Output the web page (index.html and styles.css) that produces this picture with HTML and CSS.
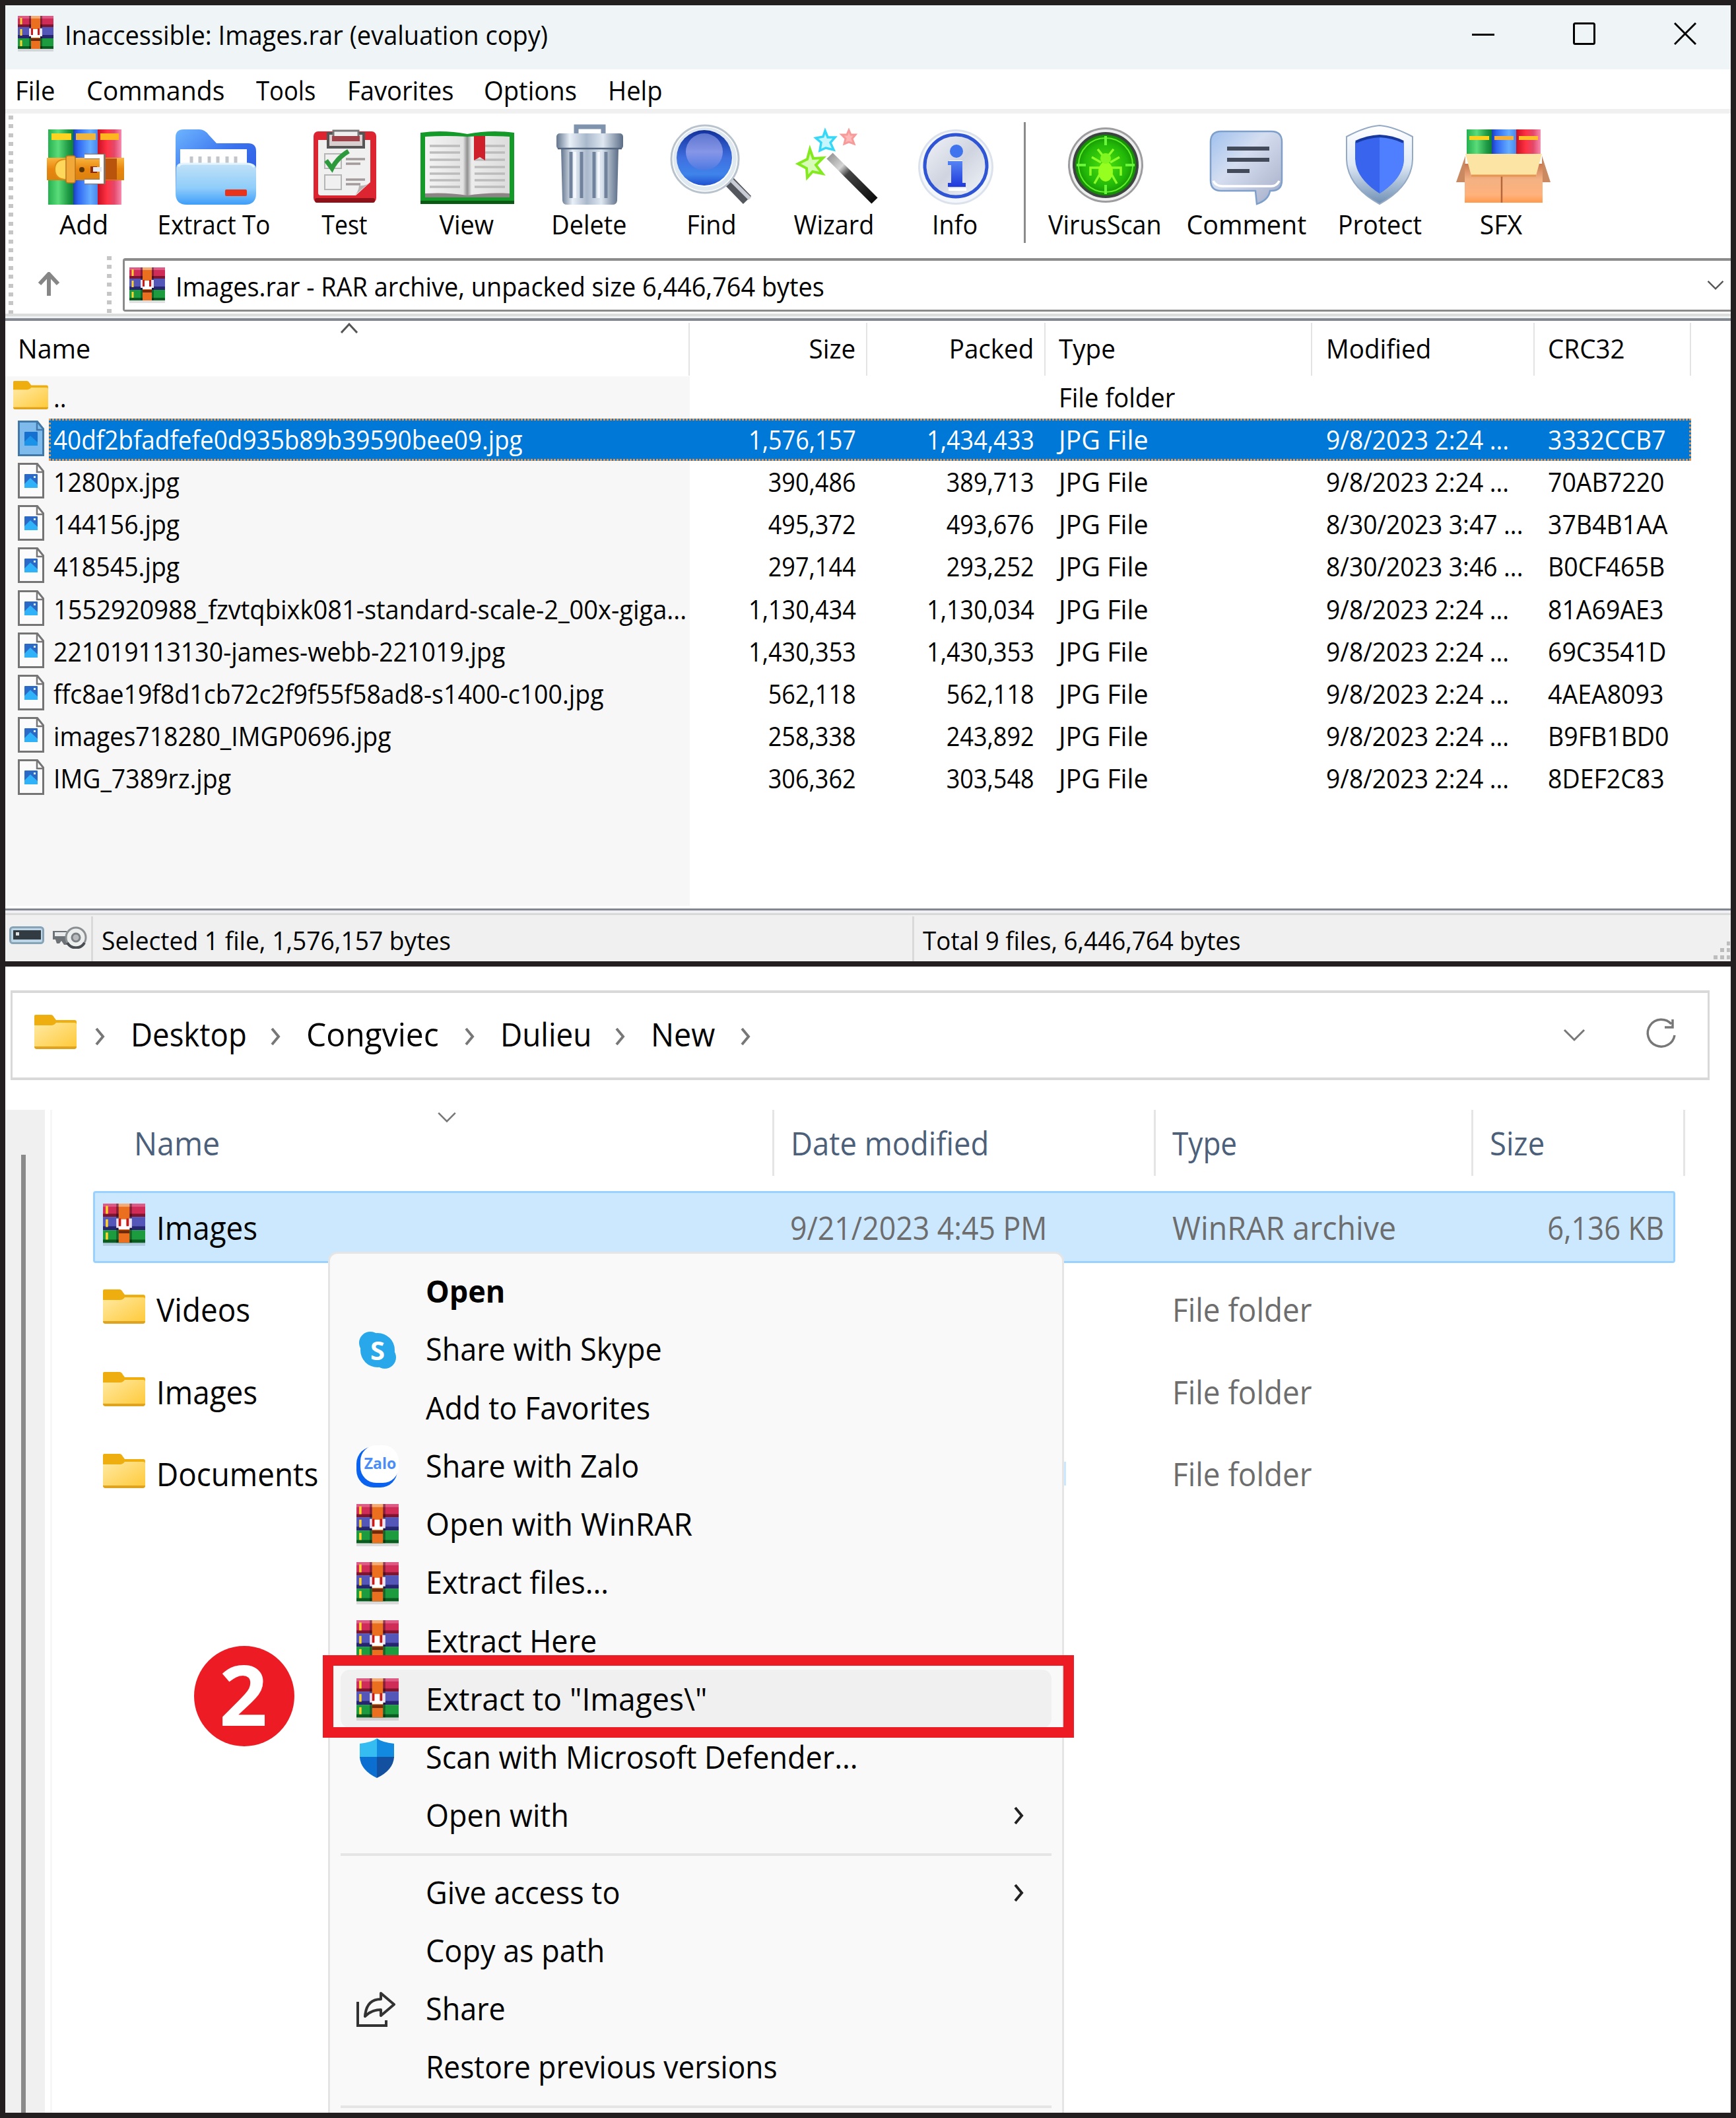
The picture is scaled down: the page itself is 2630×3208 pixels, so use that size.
FILE: index.html
```html
<!DOCTYPE html>
<html lang="en">
<head>
<meta charset="utf-8">
<title>Inaccessible: Images.rar</title>
<link rel="stylesheet" href="styles.css">
</head>
<body>
<svg class="defs" width="0" height="0">
  <defs>
    <linearGradient id="gFolder" x1="0" y1="0" x2="1" y2="1"><stop offset="0" stop-color="#ffe9a2"/><stop offset="1" stop-color="#ffc937"/></linearGradient>
    <linearGradient id="gG" x1="0" x2="1"><stop offset="0" stop-color="#25b04f"/><stop offset=".4" stop-color="#5bdc7a"/><stop offset=".8" stop-color="#1f9a45"/><stop offset="1" stop-color="#0f7f33"/></linearGradient>
    <linearGradient id="gB" x1="0" x2="1"><stop offset="0" stop-color="#1b3fb8"/><stop offset=".2" stop-color="#2f66f2"/><stop offset=".7" stop-color="#64adff"/><stop offset="1" stop-color="#4a86ea"/></linearGradient>
    <linearGradient id="gR" x1="0" x2="1"><stop offset="0" stop-color="#c90f22"/><stop offset=".4" stop-color="#ff3345"/><stop offset=".7" stop-color="#e4486a"/><stop offset="1" stop-color="#f78bb0"/></linearGradient>
    <linearGradient id="gO" x1="0" x2="0" y1="0" y2="1"><stop offset="0" stop-color="#f9b53e"/><stop offset=".5" stop-color="#e8860f"/><stop offset="1" stop-color="#d9820f"/></linearGradient>
    <linearGradient id="gSky" x1="0" x2="0" y1="0" y2="1"><stop offset="0" stop-color="#c2e2f8"/><stop offset=".6" stop-color="#8fcdfa"/><stop offset="1" stop-color="#3d9df8"/></linearGradient>
    <linearGradient id="gBack" x1="0" x2="1" y1="0" y2="1"><stop offset="0" stop-color="#6db5ff"/><stop offset=".5" stop-color="#3a72ee"/><stop offset="1" stop-color="#2a55e0"/></linearGradient>
    <linearGradient id="gCan" x1="0" x2="1"><stop offset="0" stop-color="#62748d"/><stop offset=".2" stop-color="#e9f0f8"/><stop offset=".45" stop-color="#a9b8cb"/><stop offset=".7" stop-color="#dfe8f2"/><stop offset="1" stop-color="#5b6d86"/></linearGradient>
    <linearGradient id="gLens" x1="0" x2="0" y1="0" y2="1"><stop offset="0" stop-color="#12309c"/><stop offset=".5" stop-color="#3f6fe0"/><stop offset=".8" stop-color="#3f84ea"/><stop offset="1" stop-color="#1f4fd0"/></linearGradient>
    <linearGradient id="gShine" x1="0" x2="0" y1="0" y2="1"><stop offset="0" stop-color="#6f86da"/><stop offset=".5" stop-color="#9aa2ec"/><stop offset="1" stop-color="#4f78e0"/></linearGradient>
    <linearGradient id="gInfo" x1="0" x2="1" y1="0" y2="1"><stop offset="0" stop-color="#f2f4f8"/><stop offset=".5" stop-color="#cfd4e0"/><stop offset="1" stop-color="#f2f5f9"/></linearGradient>
    <linearGradient id="gI" x1="0" x2="0" y1="0" y2="1"><stop offset="0" stop-color="#5584f2"/><stop offset="1" stop-color="#1f38dc"/></linearGradient>
    <linearGradient id="gNote" x1="0" x2="1" y1="0" y2="1"><stop offset="0" stop-color="#9fc0ee"/><stop offset=".4" stop-color="#d5def0"/><stop offset=".8" stop-color="#b5bdd4"/><stop offset="1" stop-color="#86a4cc"/></linearGradient>
    <linearGradient id="gRim" x1="0" x2="0" y1="0" y2="1"><stop offset="0" stop-color="#ffffff"/><stop offset=".5" stop-color="#dfe9f5"/><stop offset="1" stop-color="#6f8fb4"/></linearGradient>
    <linearGradient id="gBox" x1="0" x2="0" y1="0" y2="1"><stop offset="0" stop-color="#c9784f"/><stop offset=".4" stop-color="#f3b183"/><stop offset=".8" stop-color="#ffb27c"/><stop offset="1" stop-color="#ff9a4e"/></linearGradient>
    <linearGradient id="gPage" x1="0" x2="1"><stop offset="0" stop-color="#f4f4f4"/><stop offset=".45" stop-color="#e2e2e2"/><stop offset=".5" stop-color="#8f8f8f"/><stop offset=".55" stop-color="#ececec"/><stop offset="1" stop-color="#dcdcdc"/></linearGradient>
    <radialGradient id="gRadar"><stop offset="0" stop-color="#4fe010"/><stop offset=".7" stop-color="#22b808"/><stop offset="1" stop-color="#148a04"/></radialGradient>
    <linearGradient id="gWand" x1="0" x2="1" y1="0" y2="1"><stop offset="0" stop-color="#9a9a9a"/><stop offset=".25" stop-color="#d5d5d5"/><stop offset=".4" stop-color="#444"/><stop offset="1" stop-color="#0c0c0c"/></linearGradient>

    <symbol id="rar" viewBox="0 0 54 54">
      <rect y="50" width="54" height="4" fill="#000" opacity=".12"/>
      <rect width="54" height="17" fill="#d02c58"/><rect width="54" height="4" fill="#dd5c85"/><rect y="13" width="54" height="4" fill="#7c1530"/>
      <rect y="17" width="54" height="17" fill="#5457b8"/><rect y="29" width="54" height="5" fill="#25266e"/>
      <rect y="34" width="54" height="16" fill="#1d9c3f"/><rect y="46" width="54" height="4" fill="#0b5a20"/>
      <path d="M17 0h20v50h-20z" fill="#000" opacity=".35"/>
      <path d="M20 0h14v50h-14z" fill="#ea6f1e"/><path d="M20 0h14v4h-14z" fill="#f3ab78"/><path d="M20 34h14v4h-14z" fill="#6e2a0c"/>
      <path d="M17 19h4v12h-4zM33 19h4v12h-4z" fill="#e9e4f2"/><path d="M23 20h7v13h-7zM20 28h14v5h-14z" fill="#fff"/><path d="M20 19h3v10h-3zM30 19h3v10h-3z" fill="#c91a1a"/>
      <path d="M3.500 3h3v10h-3zM3.500 20h3v10h-3zM3.500 37h3v9h-3z" fill="#ffd42e"/>
    </symbol>
    <symbol id="folder" viewBox="0 0 64 52">
      <path d="M0 2q0-2 2-2h23q3 0 5 4l3 4h28q3 0 3 3v12H0z" fill="#efae10"/>
      <path d="M0 16h26q4 0 7-4h28q3 0 3 3v33q0 4-4 4H4q-4 0-4-4z" fill="url(#gFolder)"/>
      <path d="M0 48h64q0 4-4 4H4q-4 0-4-4z" fill="#dfa31f"/>
    </symbol>
    <symbol id="jpg" viewBox="0 0 40 54">
      <path d="M1.500 1.500h28l9 11v40h-37z" fill="#fbfbfb" stroke="#757575" stroke-width="3"/>
      <path d="M29 2v12h10" fill="none" stroke="#757575" stroke-width="2.500"/>
      <rect x="10" y="17" width="20" height="21" rx="1" fill="#2a69c6"/><path d="M10 38v-6l9-9 11 10v5z" fill="#2fb2f7"/><rect x="24" y="20" width="3" height="3" fill="#d9f0ff"/>
    </symbol>
    <symbol id="jpgSel" viewBox="0 0 40 54">
      <path d="M1.500 1.500h28l9 11v40h-37z" fill="#7fbaec" stroke="#3f78a9" stroke-width="3"/>
      <path d="M29 2v12h10" fill="none" stroke="#3f78a9" stroke-width="2.500"/>
      <rect x="10" y="17" width="20" height="21" rx="1" fill="#1670cf"/><path d="M10 38v-6l9-9 11 10v5z" fill="#1a93e8"/>
    </symbol>
    <symbol id="next" viewBox="0 0 16 28"><path d="M2 2l10 12L2 26" fill="none" stroke="currentColor" stroke-width="4"/></symbol>
    <symbol id="down" viewBox="0 0 34 20"><path d="M2 2l15 15L32 2" fill="none" stroke="currentColor" stroke-width="3"/></symbol>
  </defs>
</svg>

<div class="frame">
  <section class="winrar">
    <header class="titlebar">
      <svg class="rar54"><use href="#rar"/></svg>
      <span class="t title">Inaccessible: Images.rar (evaluation copy)</span>
      <div class="controls">
        <svg width="34" height="34" viewBox="0 0 34 34"><path d="M0 18.500h34" stroke="#000" stroke-width="3"/></svg>
        <svg width="34" height="34" viewBox="0 0 34 34"><rect x="1.500" y="1.500" width="31" height="31" rx="2" fill="none" stroke="#000" stroke-width="3"/></svg>
        <svg width="34" height="34" viewBox="0 0 34 34"><path d="M1 1l32 32M33 1L1 33" stroke="#000" stroke-width="3"/></svg>
      </div>
    </header>

    <nav class="menubar">
      <div class="m1"><span class="t">File</span></div><div class="m2"><span class="t">Commands</span></div><div class="m3"><span class="t">Tools</span></div><div class="m4"><span class="t">Favorites</span></div><div class="m5"><span class="t">Options</span></div><div><span class="t">Help</span></div>
    </nav>

    <div class="bars">
      <div class="grip"></div>
      <div class="bars-main">
        <div class="toolbar">
          <div class="tool w-add">
            <svg viewBox="-3 0 150 124">
              <rect x="18" y="8" width="38" height="114" fill="url(#gG)"/><rect x="56" y="8" width="37" height="114" fill="url(#gB)"/><rect x="93" y="8" width="36" height="114" fill="url(#gR)"/>
              <rect x="23" y="14" width="30" height="10" fill="#fcd421"/><rect x="60" y="14" width="30" height="10" fill="#f0b53c"/><rect x="97" y="14" width="28" height="10" fill="#ffb51f"/>
              <rect x="16" y="51" width="117" height="34" fill="url(#gO)"/><rect x="104" y="52" width="18" height="32" fill="#b9540c"/>
              <path d="M46 53q-18 0-18 15.500T46 84z" fill="#ffd75a" stroke="#e08c14" stroke-width="2"/>
              <rect x="45" y="48" width="14" height="41" rx="3" fill="#f1a838" stroke="#b9751a" stroke-width="1.500"/>
              <circle cx="69" cy="69" r="4" fill="#5a3505"/><rect x="82" y="64" width="10" height="10" fill="#8a2c0a"/><path d="M73 49h28v38H73" fill="none" stroke="#8b7060" stroke-width="8"/><path d="M73 49h26v38H73" fill="none" stroke="#fff" stroke-width="6"/><rect x="86" y="65" width="13" height="7" fill="#e6e8f0"/>
            </svg><span class="t">Add</span></div>
          <div class="tool w-ext">
            <svg viewBox="-3 0 150 124">
              <path d="M14 20q0-12 12-12h24q8 0 14 8l12 13h48q12 0 12 12v62H14z" fill="url(#gBack)"/>
              <path d="M21 38h101v30H21z" fill="#fff"/><path d="M38 49v12M51 49v12M65 49v12M78 49v12M92 49v12M105 49v12" stroke="#c2c5ca" stroke-width="5"/>
              <path d="M15 66q1-8 10-7h96q14-1 15 8v38q0 17-17 17H31q-17 0-17-17z" fill="url(#gSky)"/><path d="M18 64q3-4 8-4h96q7 0 11 5" fill="none" stroke="#e3f4ff" stroke-width="3"/>
              <rect x="89" y="99" width="33" height="10" rx="2" fill="#e8321a"/>
            </svg><span class="t">Extract To</span></div>
          <div class="tool w-test">
            <svg viewBox="-3 0 150 124">
              <rect x="25" y="11" width="95" height="108" rx="7" fill="#dc2530"/><rect x="27" y="112" width="91" height="7" rx="3" fill="#8f1018"/>
              <path d="M32 24h79v64l-22 20H36q-4 0-4-4z" fill="#f1f0f0"/><path d="M111 88q-6 6-17 5-1 10-7 15z" fill="#b9b4b4"/>
              <path d="M47 14h54v21H47z" fill="#d9cfd0" stroke="#555" stroke-width="4"/><path d="M55 18v-8h38v8" fill="#eee" stroke="#777" stroke-width="3"/><rect x="53" y="18" width="42" height="8" fill="#a04048"/>
              <rect x="42" y="45" width="25" height="22" fill="none" stroke="#b5b5b5" stroke-width="2"/><rect x="42" y="77" width="25" height="22" fill="none" stroke="#b5b5b5" stroke-width="2"/>
              <path d="M44 55l9 12q8-16 25-26" fill="none" stroke="#2c9a3c" stroke-width="7"/>
              <path d="M74 53h29M74 60h22M74 84h29M74 91h22" stroke="#a39a9c" stroke-width="3.500"/>
            </svg><span class="t">Test</span></div>
          <div class="tool w-view">
            <svg viewBox="-3 0 150 124">
              <path d="M2 13q35-5 71 2 36-7 71-2v108H2z" fill="#149a28"/><path d="M2 116h142v5H2z" fill="#0a5a14"/>
              <path d="M9 19q32-2 64 0 32-2 64 0v89H9z" fill="url(#gPage)"/><path d="M9 105q34-2 64 3 30-5 64-3v6H9z" fill="#8c8484"/>
              <path d="M16 33h46M16 43h46M16 54h46M16 65h46M16 75h46M16 85h46M16 95h46M84 33h46M84 43h46M84 54h46M84 65h46M84 75h46M84 85h46M84 95h46" stroke="#bcbcbc" stroke-width="3.500"/>
              <path d="M83 18h17v37l-8-5-9 5z" fill="#cf1f2a"/>
            </svg><span class="t">View</span></div>
          <div class="tool w-del">
            <svg viewBox="-3 0 150 124">
              <path d="M53 14V4h41v10" fill="none" stroke="#8093ad" stroke-width="7"/>
              <path d="M30 36h87l-2 80q-1 6-7 6H39q-6 0-7-6z" fill="url(#gCan)"/>
              <path d="M45 42v70M61 42v70M80 42v70M98 42v70" stroke="#71839c" stroke-width="5"/><path d="M51 42v70M87 42v70" stroke="#f4f8fc" stroke-width="4"/>
              <rect x="23" y="14" width="101" height="24" rx="5" fill="url(#gCan)"/><path d="M25 37h97" stroke="#55677f" stroke-width="2.500"/>
            </svg><span class="t">Delete</span></div>
          <div class="tool w-find">
            <svg viewBox="-3 0 150 124">
              <path d="M96 84l30 31" stroke="#54575e" stroke-width="17"/><path d="M101 84l29 29" stroke="#c9ccd4" stroke-width="6"/>
              <circle cx="62" cy="53" r="51" fill="#fff" stroke="#b8c3cd" stroke-width="3"/><circle cx="62" cy="53" r="45" fill="none" stroke="#dfe9ef" stroke-width="6"/>
              <circle cx="61" cy="51" r="42" fill="url(#gLens)"/><circle cx="61" cy="42" r="28" fill="url(#gShine)" opacity=".8"/>
            </svg><span class="t">Find</span></div>
          <div class="tool w-wiz">
            <svg viewBox="-3 0 150 124">
              <path d="M66 52l68 68" stroke="url(#gWand)" stroke-width="13" transform="translate(0 -4)"/>
              <path d="M36 38l5 14 15-1-11 11 10 13-15-3-8 9-1-14-13-7 14-7z" fill="#d8fbb8" stroke="#84ea20" stroke-width="4"/>
              <path d="M59 10l4 10 11 0-7 8 5 11-12-3-9 4 2-12-8-7 11-2z" fill="#c8f6ff" stroke="#37d8f7" stroke-width="3.500"/>
              <path d="M95 9l3 7 7 0-5 6 3 8-8-3-7 3 2-8-6-6 8 0z" fill="#ffb7b7" stroke="#f79a9a" stroke-width="3"/>
            </svg><span class="t">Wizard</span></div>
          <div class="tool w-info">
            <svg viewBox="-3 0 150 124">
              <circle cx="73" cy="65" r="57" fill="#dbe2ec"/><circle cx="73" cy="65" r="54" fill="#f3f6fa"/><circle cx="73" cy="63" r="47" fill="url(#gInfo)" stroke="#2f55d4" stroke-width="5"/>
              <path d="M62 99h27M63 57h20" stroke="#fff" stroke-width="4"/><circle cx="74" cy="41" r="10" fill="#3f74ee"/><path d="M61 56h22v33h5v6H61v-6h5V62h-5z" fill="url(#gI)"/>
            </svg><span class="t">Info</span></div>
          <div class="rule"></div>
          <div class="tool w-vir">
            <svg viewBox="-3 0 150 124">
              <circle cx="73" cy="62" r="57" fill="#9d9d9f"/><circle cx="73" cy="62" r="54" fill="#ededed"/><circle cx="73" cy="62" r="50" fill="#3c4340"/><circle cx="73" cy="62" r="46" fill="url(#gRadar)"/>
              <circle cx="73" cy="62" r="41" fill="none" stroke="#5ff02a" stroke-width="2"/><path d="M73 18v14M73 92v14M29 62h14M103 62h14" stroke="#6af53a" stroke-width="4"/>
              <path d="M61 38l8 10M85 38l-8 10M66 58l-14-8M80 58l14-8M64 66H50v12M82 66h14v12M64 76l-8 14M82 76l8 14" stroke="#8cff2a" stroke-width="3.500" fill="none"/>
              <ellipse cx="73" cy="72" rx="11" ry="15" fill="#96ff20"/><circle cx="73" cy="52" r="8" fill="#80f520"/>
            </svg><span class="t">VirusScan</span></div>
          <div class="tool w-com">
            <svg viewBox="-3 0 150 124">
              <path d="M34 11h76q16 0 16 16v58q0 16-16 16h-2q-2 14-20 20l-2-20H34q-16 0-16-16V27q0-16 16-16z" fill="url(#gNote)" stroke="#7f9fcb" stroke-width="2.500"/>
              <path d="M22 86q4 8 14 8h74q8 0 12-8" fill="none" stroke="#fff" stroke-width="3.500"/><path d="M43 37h64M43 54h64M43 71h34" stroke="#434a5a" stroke-width="6"/>
            </svg><span class="t">Comment</span></div>
          <div class="tool w-pro">
            <svg viewBox="-3 0 150 124">
              <path d="M72 2q22 2 50 17v34q-1 41-50 68-49-27-50-68V19Q50 4 72 2z" fill="url(#gRim)" stroke="#93a9c4" stroke-width="2"/>
              <path d="M72 18q20 1 37 9v26q-1 29-37 52-36-23-37-52V27q17-8 37-9z" fill="#3864ee"/><path d="M72 18q20 1 37 9v26q-1 29-37 52z" fill="#4f7fff"/><path d="M36 27q17-8 36-9 20 1 36 9" fill="none" stroke="#17389c" stroke-width="4"/>
            </svg><span class="t">Protect</span></div>
          <div class="tool w-sfx">
            <svg viewBox="-3 0 150 124">
              <rect x="20" y="8" width="38" height="42" fill="url(#gG)"/><rect x="58" y="8" width="37" height="42" fill="url(#gB)"/><rect x="95" y="8" width="37" height="42" fill="url(#gR)"/>
              <rect x="24" y="18" width="30" height="6" fill="#ffd21f"/><rect x="62" y="18" width="29" height="6" fill="#f7b13a"/><rect x="99" y="18" width="29" height="6" fill="#ffc02a"/>
              <path d="M18 48L4 88h13zM134 48l13 40h-13z" fill="#c98a62"/><rect x="17" y="60" width="118" height="59" fill="url(#gBox)"/><path d="M73 78v41" stroke="#b5673c" stroke-width="2.500"/>
              <path d="M18 45h116l-9 33H27z" fill="#fce4a4"/><path d="M27 78h98" stroke="#e59650" stroke-width="3"/>
            </svg><span class="t">SFX</span></div>
        </div>
        <div class="addressbar">
          <div class="up"><svg width="34" height="36" viewBox="0 0 34 36"><path d="M17 36V4M3 18L17 3l14 15" fill="none" stroke="#868686" stroke-width="6"/></svg></div>
          <div class="grip grip2"></div>
          <div class="combo">
            <svg class="rar54"><use href="#rar"/></svg>
            <span class="t path">Images.rar - RAR archive, unpacked size 6,446,764 bytes</span>
            <svg class="combo-arrow"><use href="#down"/></svg>
          </div>
        </div>
      </div>
    </div>

    <div class="list">
      <div class="lhead">
        <div class="name"><span class="t">Name</span><svg class="sort" viewBox="0 0 26 16"><path d="M1 15L13 2l12 13" fill="none" stroke="#555" stroke-width="3"/></svg></div>
        <div class="r"><span class="t">Size</span></div><div class="r"><span class="t">Packed</span></div><div><span class="t">Type</span></div><div class="mod"><span class="t">Modified</span></div><div><span class="t">CRC32</span></div>
      </div>
      <div class="lbody">
        <div class="lrow"><svg class="fold"><use href="#folder"/></svg><b class="name"><span class="t">..</span></b><b></b><b></b><b class="dir"><span class="t">File folder</span></b><b></b><b></b></div>
        <div class="lrow sel"><svg class="file"><use href="#jpgSel"/></svg><b class="name"><span class="t">40df2bfadfefe0d935b89b39590bee09.jpg</span></b><b class="r"><span class="t">1,576,157</span></b><b class="r"><span class="t">1,434,433</span></b><b class="type"><span class="t">JPG File</span></b><b class="mod"><span class="t">9/8/2023 2:24 ...</span></b><b><span class="t">3332CCB7</span></b></div>
        <div class="lrow"><svg class="file"><use href="#jpg"/></svg><b class="name"><span class="t">1280px.jpg</span></b><b class="r"><span class="t">390,486</span></b><b class="r"><span class="t">389,713</span></b><b class="type"><span class="t">JPG File</span></b><b class="mod"><span class="t">9/8/2023 2:24 ...</span></b><b><span class="t">70AB7220</span></b></div>
        <div class="lrow"><svg class="file"><use href="#jpg"/></svg><b class="name"><span class="t">144156.jpg</span></b><b class="r"><span class="t">495,372</span></b><b class="r"><span class="t">493,676</span></b><b class="type"><span class="t">JPG File</span></b><b class="mod"><span class="t">8/30/2023 3:47 ...</span></b><b><span class="t">37B4B1AA</span></b></div>
        <div class="lrow"><svg class="file"><use href="#jpg"/></svg><b class="name"><span class="t">418545.jpg</span></b><b class="r"><span class="t">297,144</span></b><b class="r"><span class="t">293,252</span></b><b class="type"><span class="t">JPG File</span></b><b class="mod"><span class="t">8/30/2023 3:46 ...</span></b><b><span class="t">B0CF465B</span></b></div>
        <div class="lrow long"><svg class="file"><use href="#jpg"/></svg><b class="name"><span class="t">1552920988_fzvtqbixk081-standard-scale-2_00x-giga...</span></b><b class="r"><span class="t">1,130,434</span></b><b class="r"><span class="t">1,130,034</span></b><b class="type"><span class="t">JPG File</span></b><b class="mod"><span class="t">9/8/2023 2:24 ...</span></b><b><span class="t">81A69AE3</span></b></div>
        <div class="lrow"><svg class="file"><use href="#jpg"/></svg><b class="name"><span class="t">221019113130-james-webb-221019.jpg</span></b><b class="r"><span class="t">1,430,353</span></b><b class="r"><span class="t">1,430,353</span></b><b class="type"><span class="t">JPG File</span></b><b class="mod"><span class="t">9/8/2023 2:24 ...</span></b><b><span class="t">69C3541D</span></b></div>
        <div class="lrow"><svg class="file"><use href="#jpg"/></svg><b class="name"><span class="t">ffc8ae19f8d1cb72c2f9f55f58ad8-s1400-c100.jpg</span></b><b class="r"><span class="t">562,118</span></b><b class="r"><span class="t">562,118</span></b><b class="type"><span class="t">JPG File</span></b><b class="mod"><span class="t">9/8/2023 2:24 ...</span></b><b><span class="t">4AEA8093</span></b></div>
        <div class="lrow"><svg class="file"><use href="#jpg"/></svg><b class="name"><span class="t">images718280_IMGP0696.jpg</span></b><b class="r"><span class="t">258,338</span></b><b class="r"><span class="t">243,892</span></b><b class="type"><span class="t">JPG File</span></b><b class="mod"><span class="t">9/8/2023 2:24 ...</span></b><b><span class="t">B9FB1BD0</span></b></div>
        <div class="lrow"><svg class="file"><use href="#jpg"/></svg><b class="name"><span class="t">IMG_7389rz.jpg</span></b><b class="r"><span class="t">306,362</span></b><b class="r"><span class="t">303,548</span></b><b class="type"><span class="t">JPG File</span></b><b class="mod"><span class="t">9/8/2023 2:24 ...</span></b><b><span class="t">8DEF2C83</span></b></div>
      </div>
    </div>

    <footer class="status">
      <div class="sicons">
        <svg width="53" height="27" viewBox="0 0 53 27"><rect x="1.500" y="1.500" width="50" height="24" rx="4" fill="#bcd6e8" stroke="#88a3b5" stroke-width="3"/><rect x="6" y="6" width="42" height="14" fill="#333b42"/><rect x="10" y="9" width="5" height="5" fill="#ddd"/></svg>
        <svg width="56" height="34" viewBox="0 0 56 34"><path d="M24 7H3v13h4l2 6h4l3-4 4 6h8z" fill="#6d7276"/><path d="M24 9H6v6h18z" fill="#e8eaec"/><circle cx="38" cy="17" r="15" fill="#eceded" stroke="#8b8f92" stroke-width="3"/><path d="M25 25a15 15 0 0 0 26 0" fill="none" stroke="#4a4e52" stroke-width="4"/><circle cx="38" cy="17" r="6" fill="#b8babc" stroke="#7b8084" stroke-width="3"/></svg>
      </div>
      <div class="s1"><span class="t">Selected 1 file, 1,576,157 bytes</span></div>
      <div class="s2"><span class="t">Total 9 files, 6,446,764 bytes</span>
        <svg width="26" height="28" viewBox="0 0 26 28"><path d="M20 0h5v6h-5zM10 10h6v6h-6zM20 10h5v6h-5zM0 21h6v6H0zM10 21h6v6h-6zM20 21h5v6h-5z" fill="#bdbdbd"/></svg></div>
    </footer>
  </section>

  <section class="explorer">
    <div class="crumbs">
      <svg class="fold64"><use href="#folder"/></svg>
      <svg class="next c1"><use href="#next"/></svg><div class="b1"><span class="t">Desktop</span></div>
      <svg class="next"><use href="#next"/></svg><div class="b2"><span class="t">Congviec</span></div>
      <svg class="next"><use href="#next"/></svg><div class="b3"><span class="t">Dulieu</span></div>
      <svg class="next"><use href="#next"/></svg><div class="b4"><span class="t">New</span></div>
      <svg class="next"><use href="#next"/></svg>
      <svg class="drop"><use href="#down"/></svg>
      <svg class="refresh" viewBox="0 0 50 50"><path d="M45 27a20.500 20.500 0 1 1-5-17M42 3v12H30" fill="none" stroke="#777" stroke-width="3.500"/></svg>
    </div>
    <div class="pane">
      <div class="scroll"><div class="thumb"></div></div>
      <div class="files">
        <div class="fhead">
          <div class="fname"><span class="t">Name</span><svg class="fsort"><use href="#down"/></svg></div>
          <div><span class="t">Date modified</span></div><div class="ftype"><span class="t">Type</span></div><div><span class="t">Size</span></div>
        </div>
        <div class="frow fsel"><div class="fn"><svg class="rar64"><use href="#rar"/></svg><span class="t">Images</span></div><div class="fdate"><span class="t">9/21/2023 4:45 PM</span></div><div class="fkind"><span class="t">WinRAR archive</span></div><div class="r"><span class="t">6,136 KB</span></div></div>
        <div class="frow"><div class="fn"><svg class="fold64"><use href="#folder"/></svg><span class="t">Videos</span></div><div></div><div><span class="t">File folder</span></div><div></div></div>
        <div class="frow"><div class="fn"><svg class="fold64"><use href="#folder"/></svg><span class="t">Images</span></div><div></div><div><span class="t">File folder</span></div><div></div></div>
        <div class="frow"><div class="fn"><svg class="fold64"><use href="#folder"/></svg><span class="t">Documents</span></div><div></div><div><span class="t">File folder</span></div><div></div></div>
      </div>
    </div>
    <div class="sliver"></div>

    <div class="context">
      <div class="item bold"><i></i><span class="t">Open</span></div>
      <div class="item"><i><svg width="64" height="56" viewBox="-4 0 64 56"><circle cx="28" cy="28" r="26" fill="#28a8ea"/><circle cx="17" cy="17" r="17" fill="#28a8ea"/><circle cx="39" cy="39" r="17" fill="#28a8ea"/><text x="28" y="43" text-anchor="middle" class="skype-s">S</text></svg></i><span class="t">Share with Skype</span></div>
      <div class="item"><i></i><span class="t">Add to Favorites</span></div>
      <div class="item"><i><svg width="64" height="64" viewBox="0 0 64 64"><rect x="0" y="2" width="62" height="62" rx="26" fill="#0a63f0"/><rect x="6" y="0" width="58" height="57" rx="24" fill="#fff"/><text x="36" y="36" text-anchor="middle" class="zalo">Zalo</text></svg></i><span class="t">Share with Zalo</span></div>
      <div class="item wide"><i><svg class="rar64"><use href="#rar"/></svg></i><span class="t">Open with WinRAR</span></div>
      <div class="item"><i><svg class="rar64"><use href="#rar"/></svg></i><span class="t">Extract files...</span></div>
      <div class="item"><i><svg class="rar64"><use href="#rar"/></svg></i><span class="t">Extract Here</span></div>
      <div class="item hot wide"><i><svg class="rar64"><use href="#rar"/></svg></i><span class="t">Extract to "Images\"</span></div>
      <div class="item"><i><svg width="60" height="60" viewBox="-4 0 60 60"><path d="M27 0q8 6 26 8v22H27z" fill="#128ae0"/><path d="M27 0Q19 6 1 8v22h26z" fill="#35bdf2"/><path d="M1 28h26v32Q2 48 1 28z" fill="#0a6fd0"/><path d="M53 28H27v32q25-12 26-32z" fill="#1450a0"/></svg></i><span class="t">Scan with Microsoft Defender...</span></div>
      <div class="item"><i></i><span class="t">Open with</span><svg class="sub"><use href="#next"/></svg></div>
      <div class="line"></div>
      <div class="item"><i></i><span class="t">Give access to</span><svg class="sub"><use href="#next"/></svg></div>
      <div class="item"><i></i><span class="t">Copy as path</span></div>
      <div class="item"><i><svg width="60" height="56" viewBox="0 0 60 56"><path d="M2 16v36h43v-8" fill="none" stroke="#333" stroke-width="4"/><path d="M13 38q2-26 24-26V3l20 17-20 17v-9q-14 0-24 10z" fill="none" stroke="#333" stroke-width="4" stroke-linejoin="round"/></svg></i><span class="t">Share</span></div>
      <div class="item restore"><i></i><span class="t">Restore previous versions</span></div>
      <div class="line line2"></div>
    </div>
    <div class="marker"></div>
    <div class="badge">2</div>
  </section>
</div>
</body>
</html>
```

FILE: styles.css
```css
* { box-sizing: border-box; }
body { margin: 0; background: #231f20; font-family: "Open Sans", "Noto Sans", sans-serif; color: #000; }
.defs { position: absolute; }
svg { flex: none; display: block; }

/* Narrows the label glyphs; --s is the horizontal scale of each column. */
.t { white-space: pre; display: inline-block; transform: scaleX(var(--s, .95)); transform-origin: 0 50%; }
.r .t { transform-origin: 100% 50%; }
.tool .t { transform-origin: 50% 50%; }

.frame { width: 2630px; height: 3208px; padding: 8px; background: #231f20; display: flex; flex-direction: column; gap: 8px; }
.winrar { height: 1448px; background: #fff; display: flex; flex-direction: column; font-size: 40px; overflow: hidden; }
.rar54 { width: 54px; height: 54px; }
.rar64 { width: 64px; height: 64px; }
.fold64 { width: 64px; height: 52px; }

.titlebar { height: 97px; background: #eff4f6; display: flex; padding: 16px 52px 0 19px; }
.title { margin-left: 17px; line-height: 58px; height: 58px; }
.controls { margin-left: auto; padding-top: 10px; display: flex; gap: 119px; }
.menubar { height: 67px; border-bottom: 7px solid #f0f0f0; padding-left: 15px; display: flex; line-height: 64px; --s: .955; }
.m1 { width: 108px; } .m2 { width: 257px; --s: .98; } .m3 { width: 138px; --s: .91; } .m4 { width: 207px; } .m5 { width: 188px; }

.bars { height: 303px; display: flex; padding-left: 5px; }
.grip { width: 7px; margin-top: 3px; background: repeating-linear-gradient(#c6c6c6 0 6px, #fff 6px 13.400px); }
.bars-main { flex: 1; display: flex; flex-direction: column; }
.toolbar { height: 216px; display: flex; padding-left: 14px; }
.tool { display: flex; flex-direction: column; align-items: center; padding-top: 16px; line-height: 56px; --s: .945; }
.tool svg { width: 150px; height: 124px; }
.w-add { width: 186px; --s: 1; } .w-ext { width: 208px; --s: .92; } .w-test { width: 188px; --s: .89; } .w-view { width: 182px; } .w-del { width: 188px; }
.w-find { width: 184px; } .w-wiz { width: 186px; } .w-info { width: 182px; } .w-vir { width: 216px; } .w-com { width: 212px; --s: .985; }
.w-pro { width: 192px; } .w-sfx { width: 176px; --s: .98; }
.rule { width: 3px; height: 183px; margin: 13px 12px 0 13px; background: #8b8b8b; }
.addressbar { flex: 1; display: flex; }
.up { width: 142px; padding: 24px 0 0 37px; }
.grip2 { margin-top: 0; }
.combo { flex: 1; height: 81px; margin: 3px 0 0 17px; border: 4px solid #8b8b8b; border-width: 4px 0 3px 3px; border-radius: 4px 0 0 4px; display: flex; align-items: center; padding: 0 10px 0 7px; }
.path { margin-left: 16px; line-height: 54px; margin-top: 4px; --s: .946; }
.combo-arrow { width: 26px; height: 16px; margin-left: auto; color: #555; }

.list { flex: 1; border-top: 4px solid #dcdcdc; box-shadow: inset 0 3px #eef2f2, inset 0 7px #828790; padding-top: 7px; display: flex; flex-direction: column; }
.lhead { height: 84px; padding-top: 3px; display: grid; grid-template-columns: 1037px 269px 270px 404px 337px 237px; line-height: 66px; --s: .965; }
.lhead > div { height: 80px; border-right: 2px solid #e3e3e3; padding: 6px 16px 0 20px; }
.lhead .name { padding-left: 19px; position: relative; --s: .985; }
.lhead .mod { padding-left: 21px; }
.sort { position: absolute; left: 508px; top: 0; width: 26px; height: 16px; }
.r { text-align: right; }
.lbody { flex: 1; margin-bottom: 4px; background: linear-gradient(90deg, #f7f7f7 1037px, #fff 1037px); }
.lrow { height: 64.100px; display: grid; grid-template-columns: 66px 971px 269px 270px 404px 337px 237px; align-items: center; line-height: 64px; width: 2554px; --s: .937; }
.lrow b { font-weight: 400; padding: 0 17px 0 20px; height: 64px; }
.lrow .name { padding: 0 0 0 7px; }
.lrow .mod { padding-left: 21px; --s: .93; }
.lrow .r { --s: .9; }
.lrow .type { --s: .985; }
.lrow .dir { --s: .955; }
.long .name { --s: .951; }
.fold { width: 53px; height: 43px; margin-left: 12px; margin-top: -8px; }
.file { width: 40px; height: 54px; margin-left: 19px; margin-top: -4px; }
.sel { color: #fff; background:
  repeating-linear-gradient(90deg, #e8954a 0 3px, #0078d7 3px 5px) 66px 0 / 2488px 3px no-repeat,
  repeating-linear-gradient(90deg, #e8954a 0 3px, #0078d7 3px 5px) 66px 61px / 2488px 3px no-repeat,
  repeating-linear-gradient(#e8954a 0 3px, #0078d7 3px 6px) 66px 0 / 3px 64px no-repeat,
  repeating-linear-gradient(#e8954a 0 3px, #0078d7 3px 6px) 2551px 0 / 3px 64px no-repeat,
  linear-gradient(#0078d7, #0078d7) 66px 0 / 2488px 64px no-repeat; }
.sel .name { --s: .923; }

.status { height: 80px; border-top: 3px solid #828790; box-shadow: inset 0 4px #f0f0f4, inset 0 7px #d9d9d9; background: #f0f0f0; padding-top: 9px; display: flex; font-size: 39px; line-height: 72px; --s: .953; }
.sicons { width: 133px; display: flex; gap: 10px; padding: 15px 0 0 6px; border-right: 3px solid #d9d9d9; align-items: flex-start; }
.s1 { width: 1244px; padding-left: 13px; border-right: 3px solid #d9d9d9; }
.s2 { flex: 1; padding-left: 13px; display: flex; justify-content: space-between; align-items: flex-start; --s: .943; }
.s2 svg { margin-top: 38px; }

.explorer { flex: 1; background: #fff; position: relative; overflow: hidden; padding-top: 36px; font-size: 49px; --s: .935; }
.crumbs { height: 136px; width: 2574px; margin-left: 8px; border: 4px solid #d9d9d9; border-width: 4px 3px; display: flex; align-items: center; padding: 0 45px 0 33px; }
.crumbs .fold64 { margin-top: -10px; }
.next { width: 16px; height: 28px; color: #777; margin-top: 3px; }
.c1 { margin-left: 28px; }
.crumbs div { margin-left: 38px; line-height: 60px; margin-top: -5px; }
.b1 { width: 212px; --s: .93; } .b2 { width: 240px; --s: .98; } .b3 { width: 174px; } .b4 { width: 136px; --s: .95; }
.drop { width: 34px; height: 20px; margin-left: auto; color: #777; }
.refresh { width: 50px; height: 50px; margin-left: 90px; margin-top: -4px; }
.pane { margin-top: 45px; display: flex; height: 1519px; }
.scroll { width: 60px; background: #f0f0f0; padding: 68px 0 0 24px; }
.thumb { width: 7px; height: 100%; background: #8a8a8a; }
.files { margin-left: 8px; border-left: 3px solid #f6f6f6; flex: 1; }
.fhead { height: 100px; display: grid; grid-template-columns: 1094px 578px 481px 321px; color: #4c607a; line-height: 64px; --s: .927; }
.fhead > div { border-right: 3px solid #e5e5e5; padding: 18px 0 0 25px; }
.fhead .fname { padding-left: 124px; position: relative; --s: .95; }
.fhead .ftype { --s: .9; }
.fsort { position: absolute; left: 583px; top: 3px; width: 30px; height: 17px; color: #777; }
.frow { width: 2397px; height: 109px; margin: 0 0 15.500px 62px; display: grid; grid-template-columns: 1053px 579px 481px 1fr; align-items: center; color: #6d6d6d; padding: 0 14px 0 3px; line-height: 70px; }
.fhead + .frow { margin-top: 23px; }
.fsel { background: #cce8ff; border: 3px solid #99d1ff; border-radius: 4px; padding: 0 14px 0 0; }
.fdate { --s: .91; }
.fkind { --s: .95; }
.frow .r { --s: .888; }
.fn { display: flex; gap: 17px; padding-left: 12px; color: #000; align-items: center; }
.fn svg { margin-top: -8px; }
.sliver { position: absolute; left: 1603px; top: 750px; width: 4px; height: 36px; background: #cce8ff; }

.context { position: absolute; left: 489px; top: 432px; width: 1115px; height: 1330px; background: #f9f9f9; border: 3px solid #e5e5e5; border-radius: 14px; padding: 12px 16px 0; font-size: 47px; --s: .957; }
.item { height: 88.250px; display: flex; align-items: center; line-height: 80px; padding-right: 41px; }
.item i { width: 129px; padding-left: 24px; height: 64px; display: flex; align-items: center; margin-top: 3px; }
.item .t { flex: 1; }
.bold { font-weight: 700; }
.wide { --s: .984; }
.restore { --s: .943; }
.hot { background: linear-gradient(#f0f0f0, #f0f0f0); border-radius: 14px; }
.sub { width: 16px; height: 28px; color: #222; margin-top: 2px; }
.line { height: 4px; background: #e5e5e5; margin: 13px 0 11px; }
.line2 { margin: 14px 0 0; }
.skype-s { font: 700 40px "Open Sans", sans-serif; fill: #fff; }
.zalo { font: 700 23px "Open Sans", sans-serif; fill: #4a8cf8; }
.marker { position: absolute; left: 481px; top: 1043px; width: 1138px; height: 125px; border: 16px solid #ed1c24; }
.badge { position: absolute; left: 286px; top: 1029px; width: 152px; height: 152px; border-radius: 50%; background: #ed1c24; color: #fff; font-weight: 700; font-size: 128px; line-height: 143px; text-align: center; text-indent: -3px; }
```
